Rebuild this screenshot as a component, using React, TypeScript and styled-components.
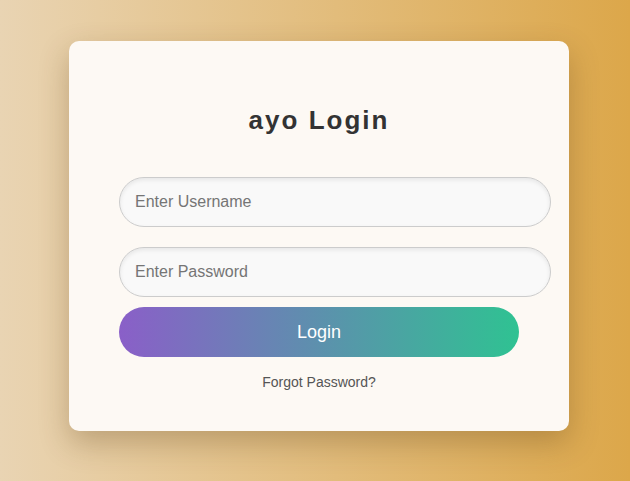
import styled, { createGlobalStyle } from 'styled-components'

const GlobalStyle = createGlobalStyle`
  html, body {
    margin: 0;
    height: 100%;
  }
  body {
    font-family: 'Liberation Sans', Arial, sans-serif;
    background: linear-gradient(to right, #e9d4b3, #dca74a);
  }
  #root {
    min-height: 100%;
  }
`

const Page = styled.div`
  min-height: 481px;
  display: flex;
  justify-content: center;
  padding: 41px 0 0 8px;
  box-sizing: border-box;
`

const Card = styled.div`
  width: 400px;
  height: 310px;
  padding: 40px 50px;
  background: #fdf9f4;
  border-radius: 10px;
  box-shadow: 0 12px 30px rgba(90, 60, 20, 0.3);
`

const Title = styled.h2`
  margin: 24px 0 42px;
  line-height: 30px;
  font-size: 26px;
  font-weight: bold;
  letter-spacing: 2px;
  text-align: center;
  color: #333;
`

const Input = styled.input`
  display: block;
  width: 100%;
  height: 48px;
  padding: 0 15px;
  margin: 0 0 ${(p: { $gap: number }) => p.$gap}px;
  border: 1px solid #ccc;
  border-radius: 25px;
  background: #f9f9f9;
  box-shadow: inset 0 2px 4px rgba(0, 0, 0, 0.08);
  font-family: 'Liberation Sans', Arial, sans-serif;
  font-size: 16px;
  color: #333;
  outline: none;

  &::placeholder {
    color: #757575;
  }
`

const LoginButton = styled.button`
  display: block;
  width: 400px;
  height: 50px;
  border: none;
  border-radius: 25px;
  background: linear-gradient(to right, #8a5fc8, #2fc292);
  color: #fff;
  font-family: 'Liberation Sans', Arial, sans-serif;
  font-size: 18px;
  cursor: pointer;
`

const Forgot = styled.a`
  display: block;
  margin-top: 17px;
  text-align: center;
  font-size: 14px;
  line-height: 17px;
  color: #555;
  text-decoration: none;
`

export default function App() {
  return (
    <>
      <GlobalStyle />
      <Page>
        <Card>
          <Title>ayo Login</Title>
          <Input $gap={20} type="text" placeholder="Enter Username" />
          <Input $gap={10} type="password" placeholder="Enter Password" />
          <LoginButton>Login</LoginButton>
          <Forgot href="#">Forgot Password?</Forgot>
        </Card>
      </Page>
    </>
  )
}
